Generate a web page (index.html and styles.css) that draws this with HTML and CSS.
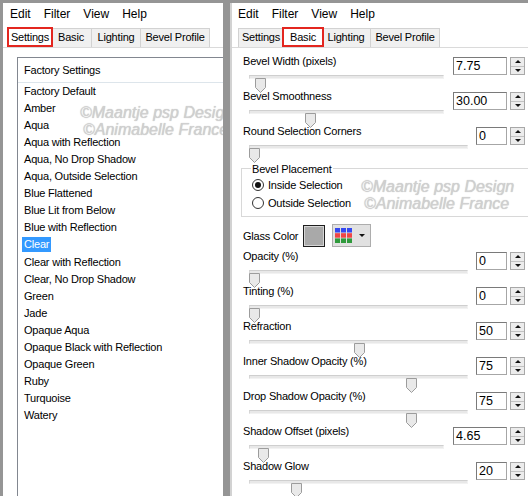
FILE: index.html
```html
<!DOCTYPE html>
<html>
<head>
<meta charset="utf-8">
<link rel="stylesheet" href="styles.css">
</head>
<body>
<div class="screen">
  <section class="win win-left">
    <nav class="menubar"><span>Edit</span><span>Filter</span><span>View</span><span>Help</span></nav>
    <div class="tabs">
      <div class="tab t-settings active">Settings</div>
      <div class="tab t-basic">Basic</div>
      <div class="tab t-lighting">Lighting</div>
      <div class="tab t-bevel">Bevel Profile</div>
    </div>
    <div class="page page-list">
      <div class="listbox">
        <div class="lb-head">Factory Settings</div>
        <ul class="lb-items">
          <li>Factory Default</li>
          <li>Amber</li>
          <li>Aqua</li>
          <li>Aqua with Reflection</li>
          <li>Aqua, No Drop Shadow</li>
          <li>Aqua, Outside Selection</li>
          <li>Blue Flattened</li>
          <li>Blue Lit from Below</li>
          <li>Blue with Reflection</li>
          <li><span class="sel">Clear</span></li>
          <li>Clear with Reflection</li>
          <li>Clear, No Drop Shadow</li>
          <li>Green</li>
          <li>Jade</li>
          <li>Opaque Aqua</li>
          <li>Opaque Black with Reflection</li>
          <li>Opaque Green</li>
          <li>Ruby</li>
          <li>Turquoise</li>
          <li>Watery</li>
        </ul>
      </div>
    </div>
    <div class="watermark wm-left"><div>©Maantje psp Design</div><div>©Animabelle France</div></div>
  </section>
  <div class="sep"></div>
  <section class="win win-right">
    <nav class="menubar"><span>Edit</span><span>Filter</span><span>View</span><span>Help</span></nav>
    <div class="tabs">
      <div class="tab t-settings">Settings</div>
      <div class="tab t-basic active">Basic</div>
      <div class="tab t-lighting">Lighting</div>
      <div class="tab t-bevel">Bevel Profile</div>
    </div>
    <div class="page page-form">
      <div class="param wide">
        <div class="pcol">
          <div class="plabel">Bevel Width (pixels)</div>
          <div class="slider"><div class="track"></div><div class="thumb" style="left:6px"><svg width="11" height="15" viewBox="0 0 11 15"><path d="M0.5 0.5H10.5V9.5L5.5 14.5L0.5 9.5Z" fill="#e9e9e9" stroke="#9c9c9c"/></svg></div></div>
        </div>
        <div class="spin"><div class="field">7.75</div><div class="arrows"><span class="up"></span><span class="down"></span></div></div>
      </div>
      <div class="param wide">
        <div class="pcol">
          <div class="plabel">Bevel Smoothness</div>
          <div class="slider"><div class="track"></div><div class="thumb" style="left:56px"><svg width="11" height="15" viewBox="0 0 11 15"><path d="M0.5 0.5H10.5V9.5L5.5 14.5L0.5 9.5Z" fill="#e9e9e9" stroke="#9c9c9c"/></svg></div></div>
        </div>
        <div class="spin"><div class="field">30.00</div><div class="arrows"><span class="up"></span><span class="down"></span></div></div>
      </div>
      <div class="param">
        <div class="pcol">
          <div class="plabel">Round Selection Corners</div>
          <div class="slider"><div class="track"></div><div class="thumb" style="left:0px"><svg width="11" height="15" viewBox="0 0 11 15"><path d="M0.5 0.5H10.5V9.5L5.5 14.5L0.5 9.5Z" fill="#e9e9e9" stroke="#9c9c9c"/></svg></div></div>
        </div>
        <div class="spin"><div class="field">0</div><div class="arrows"><span class="up"></span><span class="down"></span></div></div>
      </div>

      <div class="group">
        <div class="gcap"><span>Bevel Placement</span></div>
        <div class="radio"><span class="rb on"></span>Inside Selection</div>
        <div class="radio"><span class="rb"></span>Outside Selection</div>
      </div>

      <div class="glass">
        <div class="glabel">Glass Color</div>
        <div class="swatch"></div>
        <div class="cbtn">
          <svg width="17" height="15" viewBox="0 0 17 15">
            <rect x="0" y="0" width="5" height="4.5" fill="#3448f0"/><rect x="6" y="0" width="5" height="4.5" fill="#3448f0"/><rect x="12" y="0" width="5" height="4.5" fill="#3448f0"/>
            <rect x="0" y="5.2" width="5" height="4.5" fill="#ef4545"/><rect x="6" y="5.2" width="5" height="4.5" fill="#ef4545"/><rect x="12" y="5.2" width="5" height="4.5" fill="#ef4545"/>
            <rect x="0" y="10.4" width="5" height="4.6" fill="#2f9a3c"/><rect x="6" y="10.4" width="5" height="4.6" fill="#2f9a3c"/><rect x="12" y="10.4" width="5" height="4.6" fill="#2f9a3c"/>
          </svg>
          <span class="caret"></span>
        </div>
      </div>

      <div class="param">
        <div class="pcol">
          <div class="plabel">Opacity (%)</div>
          <div class="slider"><div class="track"></div><div class="thumb" style="left:0px"><svg width="11" height="15" viewBox="0 0 11 15"><path d="M0.5 0.5H10.5V9.5L5.5 14.5L0.5 9.5Z" fill="#e9e9e9" stroke="#9c9c9c"/></svg></div></div>
        </div>
        <div class="spin"><div class="field">0</div><div class="arrows"><span class="up"></span><span class="down"></span></div></div>
      </div>
      <div class="param">
        <div class="pcol">
          <div class="plabel">Tinting (%)</div>
          <div class="slider"><div class="track"></div><div class="thumb" style="left:0px"><svg width="11" height="15" viewBox="0 0 11 15"><path d="M0.5 0.5H10.5V9.5L5.5 14.5L0.5 9.5Z" fill="#e9e9e9" stroke="#9c9c9c"/></svg></div></div>
        </div>
        <div class="spin"><div class="field">0</div><div class="arrows"><span class="up"></span><span class="down"></span></div></div>
      </div>
      <div class="param">
        <div class="pcol">
          <div class="plabel">Refraction</div>
          <div class="slider"><div class="track"></div><div class="thumb" style="left:105px"><svg width="11" height="15" viewBox="0 0 11 15"><path d="M0.5 0.5H10.5V9.5L5.5 14.5L0.5 9.5Z" fill="#e9e9e9" stroke="#9c9c9c"/></svg></div></div>
        </div>
        <div class="spin"><div class="field">50</div><div class="arrows"><span class="up"></span><span class="down"></span></div></div>
      </div>
      <div class="param">
        <div class="pcol">
          <div class="plabel">Inner Shadow Opacity (%)</div>
          <div class="slider"><div class="track"></div><div class="thumb" style="left:157px"><svg width="11" height="15" viewBox="0 0 11 15"><path d="M0.5 0.5H10.5V9.5L5.5 14.5L0.5 9.5Z" fill="#e9e9e9" stroke="#9c9c9c"/></svg></div></div>
        </div>
        <div class="spin"><div class="field">75</div><div class="arrows"><span class="up"></span><span class="down"></span></div></div>
      </div>
      <div class="param">
        <div class="pcol">
          <div class="plabel">Drop Shadow Opacity (%)</div>
          <div class="slider"><div class="track"></div><div class="thumb" style="left:157px"><svg width="11" height="15" viewBox="0 0 11 15"><path d="M0.5 0.5H10.5V9.5L5.5 14.5L0.5 9.5Z" fill="#e9e9e9" stroke="#9c9c9c"/></svg></div></div>
        </div>
        <div class="spin"><div class="field">75</div><div class="arrows"><span class="up"></span><span class="down"></span></div></div>
      </div>
      <div class="param wide">
        <div class="pcol">
          <div class="plabel">Shadow Offset (pixels)</div>
          <div class="slider"><div class="track"></div><div class="thumb" style="left:9px"><svg width="11" height="15" viewBox="0 0 11 15"><path d="M0.5 0.5H10.5V9.5L5.5 14.5L0.5 9.5Z" fill="#e9e9e9" stroke="#9c9c9c"/></svg></div></div>
        </div>
        <div class="spin"><div class="field">4.65</div><div class="arrows"><span class="up"></span><span class="down"></span></div></div>
      </div>
      <div class="param">
        <div class="pcol">
          <div class="plabel">Shadow Glow</div>
          <div class="slider"><div class="track"></div><div class="thumb" style="left:42px"><svg width="11" height="15" viewBox="0 0 11 15"><path d="M0.5 0.5H10.5V9.5L5.5 14.5L0.5 9.5Z" fill="#e9e9e9" stroke="#9c9c9c"/></svg></div></div>
        </div>
        <div class="spin"><div class="field">20</div><div class="arrows"><span class="up"></span><span class="down"></span></div></div>
      </div>
    </div>
    <div class="watermark wm-right"><div>©Maantje psp Design</div><div>©Animabelle France</div></div>
  </section>
</div>
</body>
</html>
```
FILE: styles.css
```css
* { box-sizing: border-box; margin: 0; padding: 0; }
html, body { width: 528px; height: 496px; overflow: hidden; background: #959595; }
body {
  font-family: "Liberation Sans", Arial, sans-serif;
  font-size: 11px;
  color: #000;
  letter-spacing: -0.2px;
}
.screen {
  display: flex;
  width: 528px;
  height: 496px;
  padding: 3px 0 0 3px;
  background: #959595;
}
.win {
  position: relative;
  background: #fff;
  overflow: hidden;
  display: flex;
  flex-direction: column;
}
.win-left { width: 220px; }
.win-right { flex: 1; }
.sep { width: 9px; border-right: 2px solid #d2d2d2; }

.menubar {
  display: flex;
  gap: 13px;
  height: 22px;
  line-height: 22px;
  font-size: 12px;
  letter-spacing: 0;
  padding-left: 7px;
}
.win-right .menubar { padding-left: 6px; }

.tabs {
  display: flex;
  align-items: flex-end;
  height: 22px;
  padding-left: 6px;
}
.tab {
  height: 19px;
  line-height: 16px;
  text-align: center;
  background: #f0f0f0;
  border: 1px solid #d2d2d2;
  border-bottom: none;
  white-space: nowrap;
}
.tab + .tab { margin-left: -1px; }
.t-settings { width: 46px; }
.t-basic { width: 42px; }
.t-lighting { width: 50px; }
.t-bevel { width: 70px; }
.tab.active {
  position: relative;
  z-index: 1;
  height: 20px;
  margin: 0 -2px;
  border: 2px solid #e3261f;
  background: #fff;
}

.page { flex: 1; border-top: 1px solid #dadada; }

/* list page */
.page-list { padding: 9px 0 0 14px; }
.listbox {
  height: 100%;
  margin-right: -20px;
  border: 1px solid #828790;
  border-bottom: none;
}
.lb-head {
  height: 25px;
  line-height: 24px;
  padding-left: 6px;
  border-bottom: 1px solid #dde5eb;
}
.lb-items { list-style: none; }
.lb-items li {
  height: 17px;
  line-height: 17px;
  padding-left: 6px;
  white-space: nowrap;
}
.sel {
  display: block;
  width: max-content;
  margin: 1px 0 0 -2px;
  padding: 0 2px;
  line-height: 15px;
  background: #3399ff;
  color: #fff;
}

/* form page */
.page-form { padding: 6px 3px 0 11px; }
.param { display: flex; height: 35px; }
.pcol { flex: 1; margin-right: 8px; }
.param.wide .pcol { margin-right: 9px; }
.plabel { line-height: 14px; white-space: nowrap; }
.slider { position: relative; height: 21px; margin-left: 6px; }
.track {
  margin-top: 7px;
  height: 4px;
  background: #e8e8e8;
  border-top: 1px solid #cfcfcf;
  border-left: 1px solid #d6d6d6;
  border-right: 1px solid #f2f2f2;
  border-bottom: 1px solid #f2f2f2;
}
.thumb { position: absolute; top: 3px; width: 11px; height: 15px; }
.thumb svg { display: block; }

.spin { display: flex; gap: 3px; margin-top: 3px; height: 18px; }
.field {
  width: 31px;
  height: 18px;
  border: 1px solid #7a7a7a;
  border-bottom-color: #a6a6a6;
  border-right-color: #a6a6a6;
  padding-left: 2px;
  font-size: 12.5px;
  line-height: 16px;
  letter-spacing: 0;
}
.wide .field { width: 54px; }
.arrows {
  width: 15px;
  display: flex;
  flex-direction: column;
  border: 1px solid #a8a8a8;
  background: #ececec;
}
.arrows span {
  flex: 1;
  display: flex;
  align-items: center;
  justify-content: center;
}
.arrows span + span { border-top: 1px solid #c2c2c2; }
.arrows span::before {
  content: "";
  width: 0;
  height: 0;
  border-left: 3px solid transparent;
  border-right: 3px solid transparent;
}
.up::before { border-bottom: 3px solid #111; }
.down::before { border-top: 3px solid #111; }

.group {
  margin: 9px -3px 0 -2px;
  border: 1px solid #d8d8d8;
  border-right: none;
  padding: 0 0 4px 10px;
}
.gcap { margin-top: -7px; line-height: 14px; }
.gcap span { background: #fff; padding: 0 1px; margin-left: -1px; }
.radio { display: flex; align-items: center; gap: 4px; height: 18px; }
.rb {
  position: relative;
  width: 12px;
  height: 12px;
  border-radius: 50%;
  border: 1px solid #333;
  background: #fff;
}
.rb.on::after {
  content: "";
  position: absolute;
  left: 2px;
  top: 2px;
  width: 6px;
  height: 6px;
  border-radius: 50%;
  background: #111;
}

.glass { display: flex; align-items: center; height: 23px; margin: 7px 0 2px; }
.glabel { width: 60px; white-space: nowrap; }
.swatch {
  width: 22px;
  height: 22px;
  border: 1px solid #1e1e1e;
  background: #a9a9a9;
  box-shadow: inset 0 0 0 1px #d6d6d6;
}
.cbtn {
  display: flex;
  align-items: center;
  gap: 7px;
  margin-left: 7px;
  width: 39px;
  height: 23px;
  padding-left: 2px;
  border: 1px solid #adadad;
  background: #e1e1e1;
}
.cbtn svg { display: block; }
.caret {
  width: 0;
  height: 0;
  border-left: 3px solid transparent;
  border-right: 3px solid transparent;
  border-top: 3px solid #111;
}

.watermark {
  position: absolute;
  font-style: italic;
  font-size: 16px;
  line-height: 17px;
  letter-spacing: 0;
  color: #d0d0d0;
  text-shadow: 0 0 1px #bdbdbd;
  white-space: nowrap;
  pointer-events: none;
}
.watermark div + div { padding-left: 3px; }
.wm-left { left: 77px; top: 101px; }
.wm-right { left: 129px; top: 175px; }
```
